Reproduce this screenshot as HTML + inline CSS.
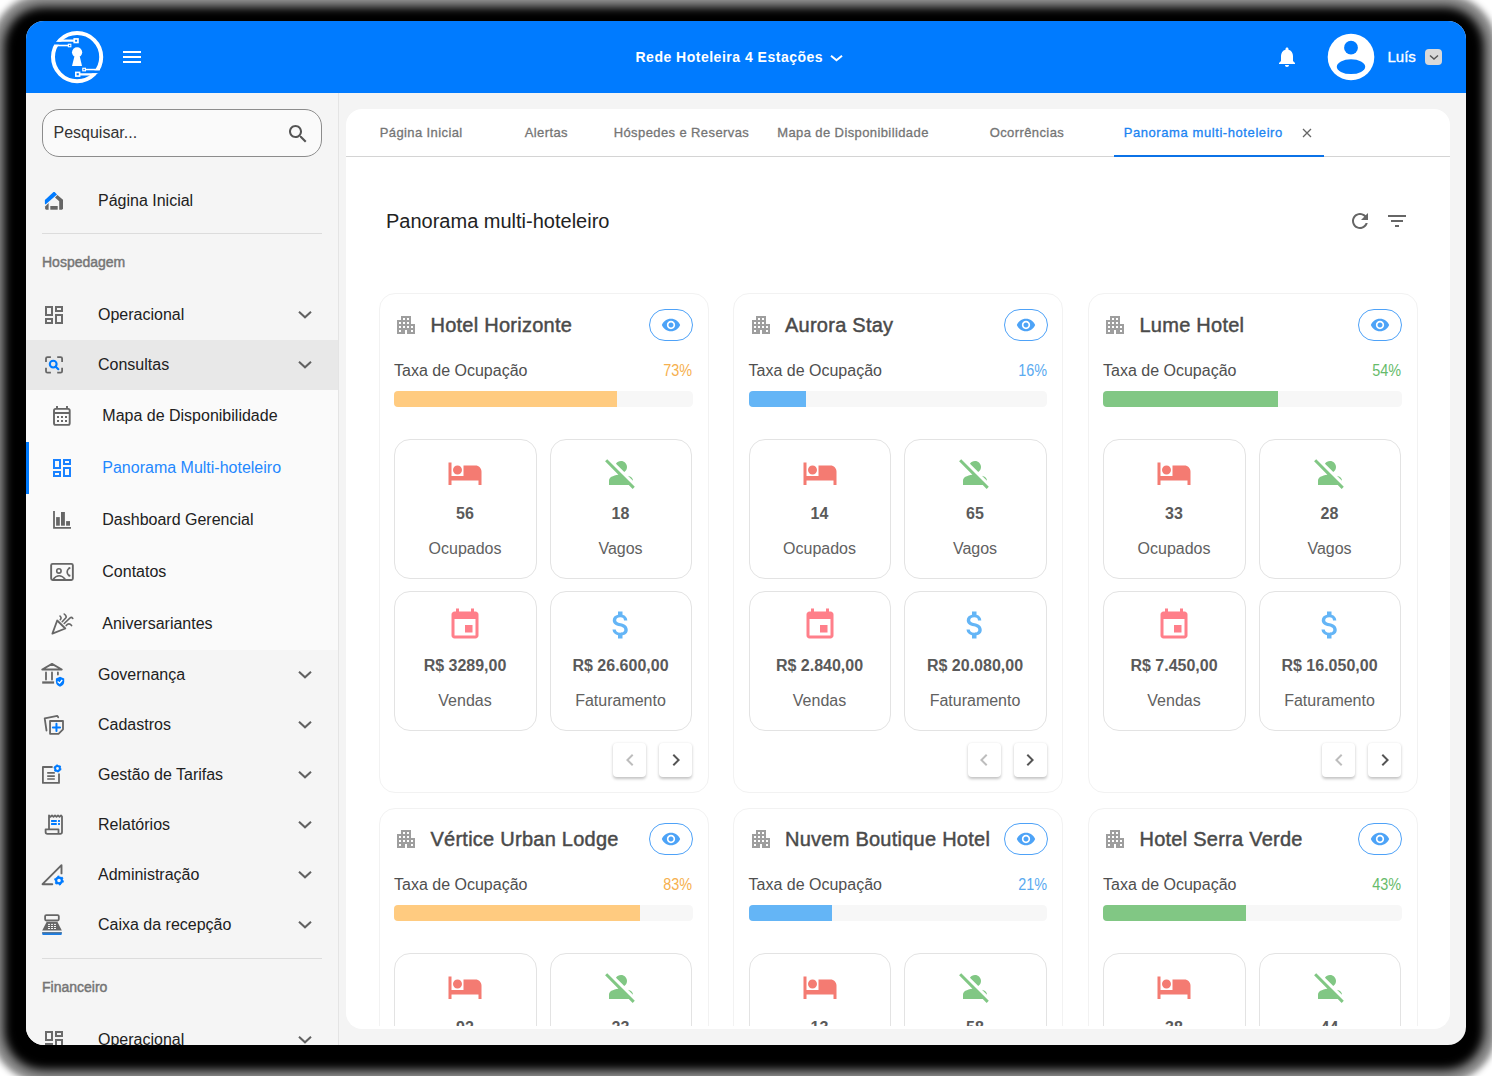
<!DOCTYPE html><html><head><meta charset="utf-8"><style>
html,body{margin:0;padding:0;}
body{width:1492px;height:1076px;position:relative;overflow:hidden;background:#fff;font-family:"Liberation Sans",sans-serif;}
.t{position:absolute;white-space:nowrap;}
svg{overflow:visible}
</style></head><body>
<div style="position:absolute;left:26px;top:21px;width:1440px;height:1024px;border-radius:20px;box-shadow:-2px 5.5px 10px 19.5px #000, -2px 5.5px 6px 31.5px rgba(0,0,0,0.45);background:#000"></div>
<div style="position:absolute;left:26px;top:21px;width:1440px;height:1024px;border-radius:18px;overflow:hidden;background:#f4f4f4">
<div style="position:absolute;left:-26px;top:-21px;width:1492px;height:1076px">
<div style="position:absolute;left:26px;top:21px;width:1440px;height:72px;background:#007bff"></div>
<svg style="position:absolute;left:48px;top:28px" width="58" height="58" viewBox="0 0 58 58">
<circle cx="29.1" cy="29.1" r="24.1" fill="none" stroke="#fff" stroke-width="4"/>
<rect x="0" y="13.7" width="24" height="3" fill="#007bff"/>
<rect x="34" y="42.3" width="24" height="3" fill="#007bff"/>
<path d="M7.6 13.7H26V11.6H15.5Z" fill="#fff"/>
<rect x="25.4" y="10.1" width="5.4" height="5.2" fill="#fff"/><rect x="27.1" y="11.8" width="2" height="1.9" fill="#007bff"/>
<rect x="6" y="16.7" width="15" height="1.6" fill="#fff"/>
<rect x="19.8" y="15.7" width="3.6" height="3.6" fill="#fff"/><rect x="21.0" y="16.9" width="1.3" height="1.3" fill="#007bff"/>
<rect x="37" y="40.8" width="15" height="1.5" fill="#fff"/>
<rect x="34.2" y="39.7" width="3.8" height="3.7" fill="#fff"/><rect x="35.4" y="40.9" width="1.4" height="1.3" fill="#007bff"/>
<path d="M50.6 45.3H32V47.4H42.5Z" fill="#fff"/>
<rect x="27" y="43.6" width="5.4" height="5.3" fill="#fff"/><rect x="28.6" y="45.2" width="2.2" height="2.1" fill="#007bff"/>
<circle cx="29.1" cy="24.3" r="5.1" fill="#fff"/>
<path d="M26.4 28.5H31.8L34 38H24z" fill="#fff"/>
</svg>
<div style="position:absolute;left:123px;top:51px;width:18px;height:2px;background:#fff"></div>
<div style="position:absolute;left:123px;top:56px;width:18px;height:2px;background:#fff"></div>
<div style="position:absolute;left:123px;top:61px;width:18px;height:2px;background:#fff"></div>
<div class="t" style="left:635.50px;top:49.95px;font-size:14px;line-height:14px;color:#fff;font-weight:700;letter-spacing:0.5px;">Rede Hoteleira 4 Estações</div>
<svg style="position:absolute;left:829.00px;top:52.50px" width="15" height="10"><polyline points="2,2.70 7.5,7.30 13,2.70" fill="none" stroke="#fff" stroke-width="2"/></svg>
<svg style="position:absolute;left:1275px;top:45px;" width="24" height="24" viewBox="0 0 24 24"><path d="M12 22c1.1 0 2-.9 2-2h-4c0 1.1.89 2 2 2zm6-6v-5c0-3.07-1.64-5.64-4.5-6.32V4c0-.83-.67-1.5-1.5-1.5s-1.5.67-1.5 1.5v.68C7.63 5.36 6 7.92 6 11v5l-2 2v1h16v-1l-2-2z" fill="#fff"/></svg>
<svg style="position:absolute;left:1327px;top:33px" width="48" height="48" viewBox="0 0 48 48">
<circle cx="24" cy="24" r="23.3" fill="#fff"/><circle cx="24" cy="14.7" r="6.9" fill="#007bff"/>
<ellipse cx="24" cy="33.7" rx="14.2" ry="7.4" fill="#007bff"/></svg>
<div class="t" style="left:1387.50px;top:49.20px;font-size:15px;line-height:15px;color:#fff;font-weight:400;-webkit-text-stroke:0.35px #fff;">Luís</div>
<div style="position:absolute;left:1425px;top:49px;width:17px;height:16px;background:#d9d9d9;border-radius:4px"></div>
<svg style="position:absolute;left:1427.50px;top:52.75px" width="12" height="8.5"><polyline points="2,2.49 6.0,6.01 10,2.49" fill="none" stroke="#555" stroke-width="1.4"/></svg>
<div style="position:absolute;left:26px;top:93px;width:312px;height:952px;background:#f5f5f5"></div>
<div style="position:absolute;left:338px;top:93px;width:1px;height:952px;background:#e4e4e4"></div>
<div style="position:absolute;left:42px;top:109px;width:280px;height:48px;box-sizing:border-box;border:1px solid #8c8c8c;border-radius:17px;background:#fafafa"></div>
<div class="t" style="left:53.50px;top:125.46px;font-size:16px;line-height:16px;color:#333;font-weight:400;">Pesquisar...</div>
<svg style="position:absolute;left:286px;top:122px;" width="24" height="24" viewBox="0 0 24 24"><path d="M15.5 14h-.79l-.28-.27C15.41 12.59 16 11.11 16 9.5 16 5.91 13.09 3 9.5 3S3 5.91 3 9.5 5.91 16 9.5 16c1.61 0 3.09-.59 4.23-1.57l.27.28v.79l5 4.99L20.49 19l-4.99-5zm-6 0C7.01 14 5 11.99 5 9.5S7.01 5 9.5 5 14 7.01 14 9.5 11.99 14 9.5 14z" fill="#555"/></svg>
<div class="t" style="left:98.00px;top:193.46px;font-size:16px;line-height:16px;color:#212121;font-weight:400;">Página Inicial</div>
<div style="position:absolute;left:42px;top:233px;width:280px;height:1px;background:#dcdcdc"></div>
<div class="t" style="left:42.00px;top:255.35px;font-size:14px;line-height:14px;color:#757575;font-weight:400;-webkit-text-stroke:0.45px #757575;">Hospedagem</div>
<svg style="position:absolute;left:42px;top:303px;" width="24" height="24" viewBox="0 0 24 24"><path d="M19 5v2h-4V5h4M9 5v6H5V5h4m10 8v6h-4v-6h4M9 17v2H5v-2h4M21 3h-8v6h8V3zM11 3H3v10h8V3zm10 8h-8v10h8V11zm-10 4H3v6h8v-6z" fill="#6b6b6b"/></svg><div class="t" style="left:98.00px;top:307.46px;font-size:16px;line-height:16px;color:#212121;font-weight:400;">Operacional</div><svg style="position:absolute;left:297.00px;top:309.00px" width="16" height="11"><polyline points="2,2.70 8.0,8.30 14,2.70" fill="none" stroke="#616161" stroke-width="2"/></svg>
<div style="position:absolute;left:26px;top:340px;width:312px;height:50px;background:#e8e8e8"></div><div class="t" style="left:98.00px;top:357.46px;font-size:16px;line-height:16px;color:#212121;font-weight:400;">Consultas</div><svg style="position:absolute;left:297.00px;top:359.00px" width="16" height="11"><polyline points="2,2.70 8.0,8.30 14,2.70" fill="none" stroke="#616161" stroke-width="2"/></svg>
<div style="position:absolute;left:26px;top:390px;width:312px;height:260px;background:#fafafa"></div>
<div style="position:absolute;left:26px;top:442px;width:3px;height:52px;background:#007bff"></div>

<div class="t" style="left:102.30px;top:408.46px;font-size:16px;line-height:16px;color:#212121;font-weight:400;">Mapa de Disponibilidade</div>
<svg style="position:absolute;left:50px;top:456px;" width="24" height="24" viewBox="0 0 24 24"><path d="M19 5v2h-4V5h4M9 5v6H5V5h4m10 8v6h-4v-6h4M9 17v2H5v-2h4M21 3h-8v6h8V3zM11 3H3v10h8V3zm10 8h-8v10h8V11zm-10 4H3v6h8v-6z" fill="#1a82ff"/></svg>
<div class="t" style="left:102.30px;top:460.46px;font-size:16px;line-height:16px;color:#1f88ff;font-weight:400;">Panorama Multi-hoteleiro</div>

<div class="t" style="left:102.30px;top:512.46px;font-size:16px;line-height:16px;color:#212121;font-weight:400;">Dashboard Gerencial</div>

<div class="t" style="left:102.30px;top:564.46px;font-size:16px;line-height:16px;color:#212121;font-weight:400;">Contatos</div>

<div class="t" style="left:102.30px;top:616.46px;font-size:16px;line-height:16px;color:#212121;font-weight:400;">Aniversariantes</div>
<div class="t" style="left:98.00px;top:667.46px;font-size:16px;line-height:16px;color:#212121;font-weight:400;">Governança</div><svg style="position:absolute;left:297.00px;top:669.00px" width="16" height="11"><polyline points="2,2.70 8.0,8.30 14,2.70" fill="none" stroke="#616161" stroke-width="2"/></svg>
<div class="t" style="left:98.00px;top:717.46px;font-size:16px;line-height:16px;color:#212121;font-weight:400;">Cadastros</div><svg style="position:absolute;left:297.00px;top:719.00px" width="16" height="11"><polyline points="2,2.70 8.0,8.30 14,2.70" fill="none" stroke="#616161" stroke-width="2"/></svg>
<div class="t" style="left:98.00px;top:767.46px;font-size:16px;line-height:16px;color:#212121;font-weight:400;">Gestão de Tarifas</div><svg style="position:absolute;left:297.00px;top:769.00px" width="16" height="11"><polyline points="2,2.70 8.0,8.30 14,2.70" fill="none" stroke="#616161" stroke-width="2"/></svg>
<div class="t" style="left:98.00px;top:817.46px;font-size:16px;line-height:16px;color:#212121;font-weight:400;">Relatórios</div><svg style="position:absolute;left:297.00px;top:819.00px" width="16" height="11"><polyline points="2,2.70 8.0,8.30 14,2.70" fill="none" stroke="#616161" stroke-width="2"/></svg>
<div class="t" style="left:98.00px;top:867.46px;font-size:16px;line-height:16px;color:#212121;font-weight:400;">Administração</div><svg style="position:absolute;left:297.00px;top:869.00px" width="16" height="11"><polyline points="2,2.70 8.0,8.30 14,2.70" fill="none" stroke="#616161" stroke-width="2"/></svg>
<div class="t" style="left:98.00px;top:917.46px;font-size:16px;line-height:16px;color:#212121;font-weight:400;">Caixa da recepção</div><svg style="position:absolute;left:297.00px;top:919.00px" width="16" height="11"><polyline points="2,2.70 8.0,8.30 14,2.70" fill="none" stroke="#616161" stroke-width="2"/></svg>
<svg style="position:absolute;left:0;top:0" width="1492" height="1076" viewBox="0 0 1492 1076">
<g fill="none" stroke="#666" stroke-width="1.8" stroke-linejoin="round">
<!-- home -->
</g>
<path d="M44.9 199.9L53.5 192.1H54.6L57 194.5L45.5 204.5L44.9 203.8Z" fill="#007bff"/>
<path d="M57.4 195.1L63 199.7V208.8L62 209.7H59.2V201.2L55 197.5Z" fill="#666"/>
<path d="M48.6 203V209.7H46L45.1 208.8V206.4Z" fill="#666"/>
<rect x="50.3" y="206" width="7.4" height="3.7" fill="#666"/>
<!-- consultas -->
<path d="M46 362V358.6Q46 357.1 47.5 357.1H50.9 M57.2 357.1H60.6Q62.1 357.1 62.1 358.6V362 M62.1 367.8V371.2Q62.1 372.7 60.6 372.7H57.2 M50.9 372.7H47.5Q46 372.7 46 371.2V367.8" fill="none" stroke="#666" stroke-width="1.8"/>
<circle cx="53.2" cy="364.1" r="3.4" fill="none" stroke="#007bff" stroke-width="2.1"/>
<path d="M55.8 366.7L58.3 369.2" stroke="#007bff" stroke-width="2.2" stroke-linecap="round"/>
<!-- mapa calendario -->
<rect x="54" y="408.9" width="15.7" height="16" rx="1.6" fill="none" stroke="#666" stroke-width="1.9"/>
<path d="M54 413H69.7 M57 406V409 M67 406V409" stroke="#666" stroke-width="1.9"/>
<g fill="#666"><rect x="57" y="416" width="2" height="2"/><rect x="61" y="416" width="2" height="2"/><rect x="65" y="416" width="2" height="2"/>
<rect x="57" y="420" width="2" height="2"/><rect x="61" y="420" width="2" height="2"/><rect x="65" y="420" width="2" height="2"/></g>
<!-- dashboard gerencial -->
<path d="M54 511V527.9H71" fill="none" stroke="#666" stroke-width="1.8"/>
<g fill="#666"><rect x="56.1" y="517.1" width="3.7" height="8.6"/><rect x="61" y="512" width="3.9" height="13.7"/><rect x="66.1" y="521.1" width="3.9" height="4.6"/></g>
<!-- contatos -->
<rect x="51.15" y="563.85" width="21.7" height="16.1" rx="1.5" fill="none" stroke="#666" stroke-width="1.9"/>
<circle cx="58.9" cy="570.9" r="2.2" fill="none" stroke="#666" stroke-width="1.6"/>
<path d="M52.9 579.4Q59.15 572.2 65.4 579.4" fill="none" stroke="#666" stroke-width="1.6"/>
<path d="M68.9 568.2Q65.4 572 68.9 575.7" fill="none" stroke="#666" stroke-width="1.6"/>
<circle cx="69.4" cy="568.2" r="1.1" fill="#666"/><circle cx="69.4" cy="575.7" r="1.1" fill="#666"/>
<!-- aniversariantes -->
<path d="M57.2 620.5L65.3 628.5L52.4 633.6Z" fill="none" stroke="#666" stroke-width="1.8" stroke-linejoin="round"/>
<path d="M64.2 623.5L70.1 617.8Q71.5 616.8 72.8 618.4 M62.2 621.7L65.9 617.8Q67 616.3 64.2 614 M60 616Q62 618 60.3 619.6 M66.2 625.6Q68.9 622.2 71.6 625.6" fill="none" stroke="#666" stroke-width="1.6" stroke-linecap="round"/>
<!-- governanca -->
<path d="M42.2 669.5L52 663.9L61.8 669.5Z" fill="none" stroke="#666" stroke-width="1.8" stroke-linejoin="round"/>
<path d="M46 672.4V679.5 M52 672.4V679.5 M57.9 672.4V674.5" stroke="#666" stroke-width="1.8" stroke-linecap="round"/>
<path d="M42.2 682.5H54.1" stroke="#666" stroke-width="2.3"/>
<path d="M60 676.7L64.2 678.4V681.5Q64.2 685.2 60 686.8Q55.9 685.2 55.9 681.5V678.4Z" fill="#007bff"/>
<path d="M57.6 681.6L59.6 683.2L62.2 680" fill="none" stroke="#fff" stroke-width="1.3"/>
<!-- cadastros -->
<path d="M46.5 730.5L44.7 718.3L57.2 715.8L58.2 717.3" fill="none" stroke="#666" stroke-width="1.8" stroke-linecap="round" stroke-linejoin="round"/>
<path d="M50.05 721H63V729.3L58.5 733.8H50.05Z" fill="none" stroke="#666" stroke-width="1.8" stroke-linejoin="round"/>
<path d="M56.45 723.8V731 M52.85 727.4H60.05" stroke="#007bff" stroke-width="2" stroke-linecap="round"/>
<!-- gestao de tarifas -->
<path d="M52.6 767H42.9V782.9H59V773.4" fill="none" stroke="#666" stroke-width="1.8" stroke-linejoin="round"/>
<path d="M47.2 772.9H54.8 M47.2 776.1H54.8 M47.2 779H54.8" stroke="#666" stroke-width="1.6"/>
<circle cx="57.5" cy="768.5" r="2.4" fill="none" stroke="#007bff" stroke-width="2"/>
<circle cx="57.5" cy="768.5" r="3.3" fill="none" stroke="#007bff" stroke-width="1.4" stroke-dasharray="1.7 1.75"/>
<!-- relatorios -->
<path d="M49 829.3V815.4L50.5 816.8L52 815.4L53.5 816.8L55 815.4L56.5 816.8L58 815.4L59.5 816.8L61 815.4L62 816.5V832Q62 833.8 60.2 833.8H47.4Q45.6 833.8 45.6 832V829.3H58.5V833.8" fill="none" stroke="#666" stroke-width="1.8" stroke-linejoin="round"/>
<path d="M51.1 821H56.75 M58.1 821H59.9 M51.1 824H56.75 M58.1 824H59.9" stroke="#007bff" stroke-width="1.9"/>
<!-- administracao -->
<path d="M61.5 873.4V865.1L42.5 884.2H52.3" fill="none" stroke="#666" stroke-width="1.9" stroke-linejoin="round" stroke-linecap="round"/>
<circle cx="59" cy="880.5" r="2.9" fill="none" stroke="#007bff" stroke-width="2.2"/>
<circle cx="59" cy="880.5" r="4.0" fill="none" stroke="#007bff" stroke-width="1.8" stroke-dasharray="1.9 2.29"/>
<!-- caixa -->
<rect x="45.1" y="915.1" width="13.7" height="5.4" rx="1.2" fill="none" stroke="#666" stroke-width="1.8"/>
<path d="M46.6 922.1H57.5L61.8 930.6H42.2Z" fill="#666"/>
<g fill="#f5f5f5"><rect x="48" y="923.9" width="2" height="1"/><rect x="51" y="923.9" width="2" height="1"/><rect x="54" y="923.9" width="2" height="1"/>
<rect x="48" y="926" width="2" height="1"/><rect x="51" y="926" width="2" height="1"/><rect x="54" y="926" width="2" height="1"/>
<rect x="48" y="928" width="2" height="1"/><rect x="51" y="928" width="2" height="1"/><rect x="54" y="928" width="2" height="1"/></g>
<path d="M42.2 932.3H61.8V933.9Q61.8 934.9 60.8 934.9H43.2Q42.2 934.9 42.2 933.9Z" fill="#1a7fe8"/>
<rect x="42.2" y="932.3" width="19.6" height="1" fill="#5a6a7a"/>
</svg>
<div style="position:absolute;left:42px;top:958px;width:280px;height:1px;background:#dcdcdc"></div>
<div class="t" style="left:42.00px;top:980.15px;font-size:14px;line-height:14px;color:#757575;font-weight:400;-webkit-text-stroke:0.45px #757575;">Financeiro</div>
<svg style="position:absolute;left:42px;top:1028px;" width="24" height="24" viewBox="0 0 24 24"><path d="M19 5v2h-4V5h4M9 5v6H5V5h4m10 8v6h-4v-6h4M9 17v2H5v-2h4M21 3h-8v6h8V3zM11 3H3v10h8V3zm10 8h-8v10h8V11zm-10 4H3v6h8v-6z" fill="#6b6b6b"/></svg><div class="t" style="left:98.00px;top:1032.46px;font-size:16px;line-height:16px;color:#212121;font-weight:400;">Operacional</div><svg style="position:absolute;left:297.00px;top:1034.00px" width="16" height="11"><polyline points="2,2.70 8.0,8.30 14,2.70" fill="none" stroke="#616161" stroke-width="2"/></svg>
<div style="position:absolute;left:346px;top:109px;width:1104px;height:919.5px;background:#fff;border-radius:16px"></div>
<div class="t" style="left:379.70px;top:125.80px;font-size:13px;line-height:13px;color:#757575;font-weight:400;-webkit-text-stroke:0.3px #757575;letter-spacing:0.4px;">Página Inicial</div>
<div class="t" style="left:524.70px;top:125.80px;font-size:13px;line-height:13px;color:#757575;font-weight:400;-webkit-text-stroke:0.3px #757575;letter-spacing:0.4px;">Alertas</div>
<div class="t" style="left:613.70px;top:125.80px;font-size:13px;line-height:13px;color:#757575;font-weight:400;-webkit-text-stroke:0.3px #757575;letter-spacing:0.4px;">Hóspedes e Reservas</div>
<div class="t" style="left:777.20px;top:125.80px;font-size:13px;line-height:13px;color:#757575;font-weight:400;-webkit-text-stroke:0.3px #757575;letter-spacing:0.4px;">Mapa de Disponibilidade</div>
<div class="t" style="left:989.70px;top:125.80px;font-size:13px;line-height:13px;color:#757575;font-weight:400;-webkit-text-stroke:0.3px #757575;letter-spacing:0.4px;">Ocorrências</div>
<div class="t" style="left:1123.70px;top:125.80px;font-size:13px;line-height:13px;color:#1b84f2;font-weight:400;-webkit-text-stroke:0.3px #1b84f2;letter-spacing:0.58px;">Panorama multi-hoteleiro</div>
<svg style="position:absolute;left:1302px;top:128px" width="10" height="10" viewBox="0 0 10 10"><path d="M1 1L9 9M9 1L1 9" stroke="#666" stroke-width="1.3"/></svg>
<div style="position:absolute;left:346px;top:156px;width:1104px;height:1px;background:#d4d4d4"></div>
<div style="position:absolute;left:1114px;top:155px;width:210px;height:2px;background:#0b72e7"></div>
<div class="t" style="left:386.00px;top:210.87px;font-size:20px;line-height:20px;color:#222;font-weight:400;">Panorama multi-hoteleiro</div>
<svg style="position:absolute;left:1348px;top:209px;" width="24" height="24" viewBox="0 0 24 24"><path d="M17.65 6.35C16.2 4.9 14.21 4 12 4c-4.42 0-7.99 3.58-7.99 8s3.57 8 7.99 8c3.73 0 6.84-2.55 7.73-6h-2.08c-.82 2.33-3.04 4-5.65 4-3.31 0-6-2.69-6-6s2.69-6 6-6c1.66 0 3.14.69 4.22 1.78L13 11h7V4l-2.35 2.35z" fill="#666"/></svg>
<svg style="position:absolute;left:1385px;top:209px;" width="24" height="24" viewBox="0 0 24 24"><path d="M10 18h4v-2h-4v2zM3 6v2h18V6H3zm3 7h12v-2H6v2z" fill="#666"/></svg>
<div style="position:absolute;left:346px;top:157px;width:1104px;height:869px;overflow:hidden">
<div style="position:absolute;left:-346px;top:-157px;width:1492px;height:1076px">
<div style="position:absolute;left:378.5px;top:293.3px;width:330px;height:499.5px;box-sizing:border-box;border:1px solid #f2f2f2;border-radius:16px;background:#fff"></div>
<svg style="position:absolute;left:394.0px;top:313.0px;" width="24" height="24" viewBox="0 0 24 24"><path d="M17 11V3H7v4H3v14h8v-4h2v4h8V11h-4zM7 19H5v-2h2v2zm0-4H5v-2h2v2zm0-4H5V9h2v2zm4 4H9v-2h2v2zm0-4H9V9h2v2zm0-4H9V5h2v2zm4 8h-2v-2h2v2zm0-4h-2V9h2v2zm0-4h-2V5h2v2zm4 12h-2v-2h2v2zm0-4h-2v-2h2v2z" fill="#9e9e9e"/></svg>
<div class="t" style="left:430.50px;top:314.67px;font-size:20px;line-height:20px;color:#4a4a4a;font-weight:400;-webkit-text-stroke:0.45px #4a4a4a;letter-spacing:0.25px;">Hotel Horizonte</div>
<div style="position:absolute;left:649.0px;top:309.0px;width:44px;height:32px;box-sizing:border-box;border:1.5px solid #4ea2f8;border-radius:16px"></div>
<svg style="position:absolute;left:661.0px;top:315.0px;" width="20" height="20" viewBox="0 0 24 24"><path d="M12 4.5C7 4.5 2.73 7.61 1 12c1.73 4.39 6 7.5 11 7.5s9.27-3.11 11-7.5c-1.73-4.39-6-7.5-11-7.5zM12 17c-2.76 0-5-2.24-5-5s2.24-5 5-5 5 2.24 5 5-2.24 5-5 5zm0-8c-1.66 0-3 1.34-3 3s1.34 3 3 3 3-1.34 3-3-1.34-3-3-3z" fill="#4da3f7"/></svg>
<div class="t" style="left:394.00px;top:362.66px;font-size:16px;line-height:16px;color:#4f4f4f;font-weight:400;">Taxa de Ocupação</div>
<div class="t" style="right:799.70px;top:362.66px;font-size:16px;line-height:16px;color:#f6b04e;font-weight:400;transform:scaleX(0.9);transform-origin:100% 50%;">73%</div>
<div style="position:absolute;left:394.0px;top:391.0px;width:298.5px;height:16px;background:#f7f7f7;border-radius:4.5px"></div>
<div style="position:absolute;left:394.0px;top:391.0px;width:223px;height:16px;background:#ffcb80;border-radius:4px 0 0 4px"></div>
<div style="position:absolute;left:394.0px;top:439.0px;width:142.5px;height:139.5px;box-sizing:border-box;border:1px solid #e3e3e3;border-radius:16px;background:#fff"></div>
<svg style="position:absolute;left:447.0px;top:454.5px;" width="36" height="36" viewBox="0 0 24 24"><path d="M7 13c1.66 0 3-1.34 3-3S8.66 7 7 7s-3 1.34-3 3 1.34 3 3 3zm12-6h-8v7H3V5H1v15h2v-3h18v3h2v-9c0-2.21-1.79-4-4-4z" fill="#f47b72"/></svg>
<div class="t" style="left:265.00px;width:400px;text-align:center;top:505.76px;font-size:16px;line-height:16px;color:#5a5a5a;font-weight:700;">56</div>
<div class="t" style="left:265.00px;width:400px;text-align:center;top:541.06px;font-size:16px;line-height:16px;color:#616161;font-weight:400;">Ocupados</div>
<div style="position:absolute;left:549.5px;top:439.0px;width:142.5px;height:139.5px;box-sizing:border-box;border:1px solid #e3e3e3;border-radius:16px;background:#fff"></div>
<svg style="position:absolute;left:602.5px;top:454.5px;" width="36" height="36" viewBox="0 0 24 24"><path d="M8.65 5.82C9.36 4.72 10.6 4 12 4c2.21 0 4 1.79 4 4 0 1.4-.72 2.64-1.82 3.35L8.65 5.82zM20 17.17c-.02-1.1-.63-2.11-1.61-2.62-.54-.28-1.13-.54-1.77-.76L20 17.17zm1.19 4.02L2.81 2.81 1.39 4.22l8.89 8.89c-1.81.23-3.39.79-4.67 1.45C4.61 15.08 4 16.11 4 17.22V20h13.17l2.61 2.61 1.41-1.42z" fill="#81c784"/></svg>
<div class="t" style="left:420.50px;width:400px;text-align:center;top:505.76px;font-size:16px;line-height:16px;color:#5a5a5a;font-weight:700;">18</div>
<div class="t" style="left:420.50px;width:400px;text-align:center;top:541.06px;font-size:16px;line-height:16px;color:#616161;font-weight:400;">Vagos</div>
<div style="position:absolute;left:394.0px;top:591.0px;width:142.5px;height:139.5px;box-sizing:border-box;border:1px solid #e3e3e3;border-radius:16px;background:#fff"></div>
<svg style="position:absolute;left:447.0px;top:606.5px;" width="36" height="36" viewBox="0 0 24 24"><path d="M17 12h-5v5h5v-5zM16 1v2H8V1H6v2H5c-1.11 0-1.99.9-1.99 2L3 19c0 1.1.89 2 2 2h14c1.1 0 2-.9 2-2V5c0-1.1-.9-2-2-2h-1V1h-2zm3 18H5V8h14v11z" fill="#ff7f8a"/></svg>
<div class="t" style="left:265.00px;width:400px;text-align:center;top:657.76px;font-size:16px;line-height:16px;color:#5a5a5a;font-weight:700;">R$ 3289,00</div>
<div class="t" style="left:265.00px;width:400px;text-align:center;top:693.06px;font-size:16px;line-height:16px;color:#616161;font-weight:400;">Vendas</div>
<div style="position:absolute;left:549.5px;top:591.0px;width:142.5px;height:139.5px;box-sizing:border-box;border:1px solid #e3e3e3;border-radius:16px;background:#fff"></div>
<svg style="position:absolute;left:602.5px;top:606.5px;" width="36" height="36" viewBox="0 0 24 24"><path d="M11.8 10.9c-2.27-.59-3-1.2-3-2.15 0-1.09 1.01-1.85 2.7-1.85 1.78 0 2.44.85 2.5 2.1h2.21c-.07-1.72-1.12-3.3-3.21-3.81V3h-3v2.16c-1.94.42-3.5 1.68-3.5 3.61 0 2.31 1.91 3.46 4.7 4.13 2.5.6 3 1.48 3 2.41 0 .69-.49 1.79-2.7 1.79-2.06 0-2.87-.92-2.98-2.1h-2.2c.12 2.19 1.76 3.42 3.68 3.83V21h3v-2.15c1.95-.37 3.5-1.5 3.5-3.55 0-2.84-2.43-3.81-4.7-4.4z" fill="#64b5f6"/></svg>
<div class="t" style="left:420.50px;width:400px;text-align:center;top:657.76px;font-size:16px;line-height:16px;color:#5a5a5a;font-weight:700;">R$ 26.600,00</div>
<div class="t" style="left:420.50px;width:400px;text-align:center;top:693.06px;font-size:16px;line-height:16px;color:#616161;font-weight:400;">Faturamento</div>
<div style="position:absolute;left:613.0px;top:743.0px;width:33px;height:34px;background:#fff;border-radius:4px;box-shadow:0 1.5px 3px rgba(0,0,0,0.24)"></div>
<div style="position:absolute;left:659.0px;top:743.0px;width:33px;height:34px;background:#fff;border-radius:4px;box-shadow:0 1.5px 3px rgba(0,0,0,0.24)"></div>
<svg style="position:absolute;left:617.5px;top:747.5px;" width="24" height="24" viewBox="0 0 24 24"><path d="M15.41 7.41 14 6l-6 6 6 6 1.41-1.41L10.83 12z" fill="#bdbdbd"/></svg>
<svg style="position:absolute;left:663.5px;top:747.5px;" width="24" height="24" viewBox="0 0 24 24"><path d="M10 6 8.59 7.41 13.17 12l-4.58 4.59L10 18l6-6z" fill="#555"/></svg>
<div style="position:absolute;left:733px;top:293.3px;width:330px;height:499.5px;box-sizing:border-box;border:1px solid #f2f2f2;border-radius:16px;background:#fff"></div>
<svg style="position:absolute;left:748.5px;top:313.0px;" width="24" height="24" viewBox="0 0 24 24"><path d="M17 11V3H7v4H3v14h8v-4h2v4h8V11h-4zM7 19H5v-2h2v2zm0-4H5v-2h2v2zm0-4H5V9h2v2zm4 4H9v-2h2v2zm0-4H9V9h2v2zm0-4H9V5h2v2zm4 8h-2v-2h2v2zm0-4h-2V9h2v2zm0-4h-2V5h2v2zm4 12h-2v-2h2v2zm0-4h-2v-2h2v2z" fill="#9e9e9e"/></svg>
<div class="t" style="left:785.00px;top:314.67px;font-size:20px;line-height:20px;color:#4a4a4a;font-weight:400;-webkit-text-stroke:0.45px #4a4a4a;letter-spacing:0.25px;">Aurora Stay</div>
<div style="position:absolute;left:1003.5px;top:309.0px;width:44px;height:32px;box-sizing:border-box;border:1.5px solid #4ea2f8;border-radius:16px"></div>
<svg style="position:absolute;left:1015.5px;top:315.0px;" width="20" height="20" viewBox="0 0 24 24"><path d="M12 4.5C7 4.5 2.73 7.61 1 12c1.73 4.39 6 7.5 11 7.5s9.27-3.11 11-7.5c-1.73-4.39-6-7.5-11-7.5zM12 17c-2.76 0-5-2.24-5-5s2.24-5 5-5 5 2.24 5 5-2.24 5-5 5zm0-8c-1.66 0-3 1.34-3 3s1.34 3 3 3 3-1.34 3-3-1.34-3-3-3z" fill="#4da3f7"/></svg>
<div class="t" style="left:748.50px;top:362.66px;font-size:16px;line-height:16px;color:#4f4f4f;font-weight:400;">Taxa de Ocupação</div>
<div class="t" style="right:445.20px;top:362.66px;font-size:16px;line-height:16px;color:#5aaaf0;font-weight:400;transform:scaleX(0.9);transform-origin:100% 50%;">16%</div>
<div style="position:absolute;left:748.5px;top:391.0px;width:298.5px;height:16px;background:#f7f7f7;border-radius:4.5px"></div>
<div style="position:absolute;left:748.5px;top:391.0px;width:57px;height:16px;background:#64b5f6;border-radius:4px 0 0 4px"></div>
<div style="position:absolute;left:748.5px;top:439.0px;width:142.5px;height:139.5px;box-sizing:border-box;border:1px solid #e3e3e3;border-radius:16px;background:#fff"></div>
<svg style="position:absolute;left:801.5px;top:454.5px;" width="36" height="36" viewBox="0 0 24 24"><path d="M7 13c1.66 0 3-1.34 3-3S8.66 7 7 7s-3 1.34-3 3 1.34 3 3 3zm12-6h-8v7H3V5H1v15h2v-3h18v3h2v-9c0-2.21-1.79-4-4-4z" fill="#f47b72"/></svg>
<div class="t" style="left:619.50px;width:400px;text-align:center;top:505.76px;font-size:16px;line-height:16px;color:#5a5a5a;font-weight:700;">14</div>
<div class="t" style="left:619.50px;width:400px;text-align:center;top:541.06px;font-size:16px;line-height:16px;color:#616161;font-weight:400;">Ocupados</div>
<div style="position:absolute;left:904.0px;top:439.0px;width:142.5px;height:139.5px;box-sizing:border-box;border:1px solid #e3e3e3;border-radius:16px;background:#fff"></div>
<svg style="position:absolute;left:957.0px;top:454.5px;" width="36" height="36" viewBox="0 0 24 24"><path d="M8.65 5.82C9.36 4.72 10.6 4 12 4c2.21 0 4 1.79 4 4 0 1.4-.72 2.64-1.82 3.35L8.65 5.82zM20 17.17c-.02-1.1-.63-2.11-1.61-2.62-.54-.28-1.13-.54-1.77-.76L20 17.17zm1.19 4.02L2.81 2.81 1.39 4.22l8.89 8.89c-1.81.23-3.39.79-4.67 1.45C4.61 15.08 4 16.11 4 17.22V20h13.17l2.61 2.61 1.41-1.42z" fill="#81c784"/></svg>
<div class="t" style="left:775.00px;width:400px;text-align:center;top:505.76px;font-size:16px;line-height:16px;color:#5a5a5a;font-weight:700;">65</div>
<div class="t" style="left:775.00px;width:400px;text-align:center;top:541.06px;font-size:16px;line-height:16px;color:#616161;font-weight:400;">Vagos</div>
<div style="position:absolute;left:748.5px;top:591.0px;width:142.5px;height:139.5px;box-sizing:border-box;border:1px solid #e3e3e3;border-radius:16px;background:#fff"></div>
<svg style="position:absolute;left:801.5px;top:606.5px;" width="36" height="36" viewBox="0 0 24 24"><path d="M17 12h-5v5h5v-5zM16 1v2H8V1H6v2H5c-1.11 0-1.99.9-1.99 2L3 19c0 1.1.89 2 2 2h14c1.1 0 2-.9 2-2V5c0-1.1-.9-2-2-2h-1V1h-2zm3 18H5V8h14v11z" fill="#ff7f8a"/></svg>
<div class="t" style="left:619.50px;width:400px;text-align:center;top:657.76px;font-size:16px;line-height:16px;color:#5a5a5a;font-weight:700;">R$ 2.840,00</div>
<div class="t" style="left:619.50px;width:400px;text-align:center;top:693.06px;font-size:16px;line-height:16px;color:#616161;font-weight:400;">Vendas</div>
<div style="position:absolute;left:904.0px;top:591.0px;width:142.5px;height:139.5px;box-sizing:border-box;border:1px solid #e3e3e3;border-radius:16px;background:#fff"></div>
<svg style="position:absolute;left:957.0px;top:606.5px;" width="36" height="36" viewBox="0 0 24 24"><path d="M11.8 10.9c-2.27-.59-3-1.2-3-2.15 0-1.09 1.01-1.85 2.7-1.85 1.78 0 2.44.85 2.5 2.1h2.21c-.07-1.72-1.12-3.3-3.21-3.81V3h-3v2.16c-1.94.42-3.5 1.68-3.5 3.61 0 2.31 1.91 3.46 4.7 4.13 2.5.6 3 1.48 3 2.41 0 .69-.49 1.79-2.7 1.79-2.06 0-2.87-.92-2.98-2.1h-2.2c.12 2.19 1.76 3.42 3.68 3.83V21h3v-2.15c1.95-.37 3.5-1.5 3.5-3.55 0-2.84-2.43-3.81-4.7-4.4z" fill="#64b5f6"/></svg>
<div class="t" style="left:775.00px;width:400px;text-align:center;top:657.76px;font-size:16px;line-height:16px;color:#5a5a5a;font-weight:700;">R$ 20.080,00</div>
<div class="t" style="left:775.00px;width:400px;text-align:center;top:693.06px;font-size:16px;line-height:16px;color:#616161;font-weight:400;">Faturamento</div>
<div style="position:absolute;left:967.5px;top:743.0px;width:33px;height:34px;background:#fff;border-radius:4px;box-shadow:0 1.5px 3px rgba(0,0,0,0.24)"></div>
<div style="position:absolute;left:1013.5px;top:743.0px;width:33px;height:34px;background:#fff;border-radius:4px;box-shadow:0 1.5px 3px rgba(0,0,0,0.24)"></div>
<svg style="position:absolute;left:972.0px;top:747.5px;" width="24" height="24" viewBox="0 0 24 24"><path d="M15.41 7.41 14 6l-6 6 6 6 1.41-1.41L10.83 12z" fill="#bdbdbd"/></svg>
<svg style="position:absolute;left:1018.0px;top:747.5px;" width="24" height="24" viewBox="0 0 24 24"><path d="M10 6 8.59 7.41 13.17 12l-4.58 4.59L10 18l6-6z" fill="#555"/></svg>
<div style="position:absolute;left:1087.5px;top:293.3px;width:330px;height:499.5px;box-sizing:border-box;border:1px solid #f2f2f2;border-radius:16px;background:#fff"></div>
<svg style="position:absolute;left:1103.0px;top:313.0px;" width="24" height="24" viewBox="0 0 24 24"><path d="M17 11V3H7v4H3v14h8v-4h2v4h8V11h-4zM7 19H5v-2h2v2zm0-4H5v-2h2v2zm0-4H5V9h2v2zm4 4H9v-2h2v2zm0-4H9V9h2v2zm0-4H9V5h2v2zm4 8h-2v-2h2v2zm0-4h-2V9h2v2zm0-4h-2V5h2v2zm4 12h-2v-2h2v2zm0-4h-2v-2h2v2z" fill="#9e9e9e"/></svg>
<div class="t" style="left:1139.50px;top:314.67px;font-size:20px;line-height:20px;color:#4a4a4a;font-weight:400;-webkit-text-stroke:0.45px #4a4a4a;letter-spacing:0.25px;">Lume Hotel</div>
<div style="position:absolute;left:1358.0px;top:309.0px;width:44px;height:32px;box-sizing:border-box;border:1.5px solid #4ea2f8;border-radius:16px"></div>
<svg style="position:absolute;left:1370.0px;top:315.0px;" width="20" height="20" viewBox="0 0 24 24"><path d="M12 4.5C7 4.5 2.73 7.61 1 12c1.73 4.39 6 7.5 11 7.5s9.27-3.11 11-7.5c-1.73-4.39-6-7.5-11-7.5zM12 17c-2.76 0-5-2.24-5-5s2.24-5 5-5 5 2.24 5 5-2.24 5-5 5zm0-8c-1.66 0-3 1.34-3 3s1.34 3 3 3 3-1.34 3-3-1.34-3-3-3z" fill="#4da3f7"/></svg>
<div class="t" style="left:1103.00px;top:362.66px;font-size:16px;line-height:16px;color:#4f4f4f;font-weight:400;">Taxa de Ocupação</div>
<div class="t" style="right:90.70px;top:362.66px;font-size:16px;line-height:16px;color:#66bb6a;font-weight:400;transform:scaleX(0.9);transform-origin:100% 50%;">54%</div>
<div style="position:absolute;left:1103.0px;top:391.0px;width:298.5px;height:16px;background:#f7f7f7;border-radius:4.5px"></div>
<div style="position:absolute;left:1103.0px;top:391.0px;width:175px;height:16px;background:#81c784;border-radius:4px 0 0 4px"></div>
<div style="position:absolute;left:1103.0px;top:439.0px;width:142.5px;height:139.5px;box-sizing:border-box;border:1px solid #e3e3e3;border-radius:16px;background:#fff"></div>
<svg style="position:absolute;left:1156.0px;top:454.5px;" width="36" height="36" viewBox="0 0 24 24"><path d="M7 13c1.66 0 3-1.34 3-3S8.66 7 7 7s-3 1.34-3 3 1.34 3 3 3zm12-6h-8v7H3V5H1v15h2v-3h18v3h2v-9c0-2.21-1.79-4-4-4z" fill="#f47b72"/></svg>
<div class="t" style="left:974.00px;width:400px;text-align:center;top:505.76px;font-size:16px;line-height:16px;color:#5a5a5a;font-weight:700;">33</div>
<div class="t" style="left:974.00px;width:400px;text-align:center;top:541.06px;font-size:16px;line-height:16px;color:#616161;font-weight:400;">Ocupados</div>
<div style="position:absolute;left:1258.5px;top:439.0px;width:142.5px;height:139.5px;box-sizing:border-box;border:1px solid #e3e3e3;border-radius:16px;background:#fff"></div>
<svg style="position:absolute;left:1311.5px;top:454.5px;" width="36" height="36" viewBox="0 0 24 24"><path d="M8.65 5.82C9.36 4.72 10.6 4 12 4c2.21 0 4 1.79 4 4 0 1.4-.72 2.64-1.82 3.35L8.65 5.82zM20 17.17c-.02-1.1-.63-2.11-1.61-2.62-.54-.28-1.13-.54-1.77-.76L20 17.17zm1.19 4.02L2.81 2.81 1.39 4.22l8.89 8.89c-1.81.23-3.39.79-4.67 1.45C4.61 15.08 4 16.11 4 17.22V20h13.17l2.61 2.61 1.41-1.42z" fill="#81c784"/></svg>
<div class="t" style="left:1129.50px;width:400px;text-align:center;top:505.76px;font-size:16px;line-height:16px;color:#5a5a5a;font-weight:700;">28</div>
<div class="t" style="left:1129.50px;width:400px;text-align:center;top:541.06px;font-size:16px;line-height:16px;color:#616161;font-weight:400;">Vagos</div>
<div style="position:absolute;left:1103.0px;top:591.0px;width:142.5px;height:139.5px;box-sizing:border-box;border:1px solid #e3e3e3;border-radius:16px;background:#fff"></div>
<svg style="position:absolute;left:1156.0px;top:606.5px;" width="36" height="36" viewBox="0 0 24 24"><path d="M17 12h-5v5h5v-5zM16 1v2H8V1H6v2H5c-1.11 0-1.99.9-1.99 2L3 19c0 1.1.89 2 2 2h14c1.1 0 2-.9 2-2V5c0-1.1-.9-2-2-2h-1V1h-2zm3 18H5V8h14v11z" fill="#ff7f8a"/></svg>
<div class="t" style="left:974.00px;width:400px;text-align:center;top:657.76px;font-size:16px;line-height:16px;color:#5a5a5a;font-weight:700;">R$ 7.450,00</div>
<div class="t" style="left:974.00px;width:400px;text-align:center;top:693.06px;font-size:16px;line-height:16px;color:#616161;font-weight:400;">Vendas</div>
<div style="position:absolute;left:1258.5px;top:591.0px;width:142.5px;height:139.5px;box-sizing:border-box;border:1px solid #e3e3e3;border-radius:16px;background:#fff"></div>
<svg style="position:absolute;left:1311.5px;top:606.5px;" width="36" height="36" viewBox="0 0 24 24"><path d="M11.8 10.9c-2.27-.59-3-1.2-3-2.15 0-1.09 1.01-1.85 2.7-1.85 1.78 0 2.44.85 2.5 2.1h2.21c-.07-1.72-1.12-3.3-3.21-3.81V3h-3v2.16c-1.94.42-3.5 1.68-3.5 3.61 0 2.31 1.91 3.46 4.7 4.13 2.5.6 3 1.48 3 2.41 0 .69-.49 1.79-2.7 1.79-2.06 0-2.87-.92-2.98-2.1h-2.2c.12 2.19 1.76 3.42 3.68 3.83V21h3v-2.15c1.95-.37 3.5-1.5 3.5-3.55 0-2.84-2.43-3.81-4.7-4.4z" fill="#64b5f6"/></svg>
<div class="t" style="left:1129.50px;width:400px;text-align:center;top:657.76px;font-size:16px;line-height:16px;color:#5a5a5a;font-weight:700;">R$ 16.050,00</div>
<div class="t" style="left:1129.50px;width:400px;text-align:center;top:693.06px;font-size:16px;line-height:16px;color:#616161;font-weight:400;">Faturamento</div>
<div style="position:absolute;left:1322.0px;top:743.0px;width:33px;height:34px;background:#fff;border-radius:4px;box-shadow:0 1.5px 3px rgba(0,0,0,0.24)"></div>
<div style="position:absolute;left:1368.0px;top:743.0px;width:33px;height:34px;background:#fff;border-radius:4px;box-shadow:0 1.5px 3px rgba(0,0,0,0.24)"></div>
<svg style="position:absolute;left:1326.5px;top:747.5px;" width="24" height="24" viewBox="0 0 24 24"><path d="M15.41 7.41 14 6l-6 6 6 6 1.41-1.41L10.83 12z" fill="#bdbdbd"/></svg>
<svg style="position:absolute;left:1372.5px;top:747.5px;" width="24" height="24" viewBox="0 0 24 24"><path d="M10 6 8.59 7.41 13.17 12l-4.58 4.59L10 18l6-6z" fill="#555"/></svg>
<div style="position:absolute;left:378.5px;top:807.5px;width:330px;height:499.5px;box-sizing:border-box;border:1px solid #f2f2f2;border-radius:16px;background:#fff"></div>
<svg style="position:absolute;left:394.0px;top:827.2px;" width="24" height="24" viewBox="0 0 24 24"><path d="M17 11V3H7v4H3v14h8v-4h2v4h8V11h-4zM7 19H5v-2h2v2zm0-4H5v-2h2v2zm0-4H5V9h2v2zm4 4H9v-2h2v2zm0-4H9V9h2v2zm0-4H9V5h2v2zm4 8h-2v-2h2v2zm0-4h-2V9h2v2zm0-4h-2V5h2v2zm4 12h-2v-2h2v2zm0-4h-2v-2h2v2z" fill="#9e9e9e"/></svg>
<div class="t" style="left:430.50px;top:828.87px;font-size:20px;line-height:20px;color:#4a4a4a;font-weight:400;-webkit-text-stroke:0.45px #4a4a4a;letter-spacing:0.25px;">Vértice Urban Lodge</div>
<div style="position:absolute;left:649.0px;top:823.2px;width:44px;height:32px;box-sizing:border-box;border:1.5px solid #4ea2f8;border-radius:16px"></div>
<svg style="position:absolute;left:661.0px;top:829.2px;" width="20" height="20" viewBox="0 0 24 24"><path d="M12 4.5C7 4.5 2.73 7.61 1 12c1.73 4.39 6 7.5 11 7.5s9.27-3.11 11-7.5c-1.73-4.39-6-7.5-11-7.5zM12 17c-2.76 0-5-2.24-5-5s2.24-5 5-5 5 2.24 5 5-2.24 5-5 5zm0-8c-1.66 0-3 1.34-3 3s1.34 3 3 3 3-1.34 3-3-1.34-3-3-3z" fill="#4da3f7"/></svg>
<div class="t" style="left:394.00px;top:876.86px;font-size:16px;line-height:16px;color:#4f4f4f;font-weight:400;">Taxa de Ocupação</div>
<div class="t" style="right:799.70px;top:876.86px;font-size:16px;line-height:16px;color:#f6b04e;font-weight:400;transform:scaleX(0.9);transform-origin:100% 50%;">83%</div>
<div style="position:absolute;left:394.0px;top:905.2px;width:298.5px;height:16px;background:#f7f7f7;border-radius:4.5px"></div>
<div style="position:absolute;left:394.0px;top:905.2px;width:246px;height:16px;background:#ffcb80;border-radius:4px 0 0 4px"></div>
<div style="position:absolute;left:394.0px;top:953.2px;width:142.5px;height:139.5px;box-sizing:border-box;border:1px solid #e3e3e3;border-radius:16px;background:#fff"></div>
<svg style="position:absolute;left:447.0px;top:968.7px;" width="36" height="36" viewBox="0 0 24 24"><path d="M7 13c1.66 0 3-1.34 3-3S8.66 7 7 7s-3 1.34-3 3 1.34 3 3 3zm12-6h-8v7H3V5H1v15h2v-3h18v3h2v-9c0-2.21-1.79-4-4-4z" fill="#f47b72"/></svg>
<div class="t" style="left:265.00px;width:400px;text-align:center;top:1019.96px;font-size:16px;line-height:16px;color:#5a5a5a;font-weight:700;">92</div>
<div class="t" style="left:265.00px;width:400px;text-align:center;top:1055.26px;font-size:16px;line-height:16px;color:#616161;font-weight:400;">Ocupados</div>
<div style="position:absolute;left:549.5px;top:953.2px;width:142.5px;height:139.5px;box-sizing:border-box;border:1px solid #e3e3e3;border-radius:16px;background:#fff"></div>
<svg style="position:absolute;left:602.5px;top:968.7px;" width="36" height="36" viewBox="0 0 24 24"><path d="M8.65 5.82C9.36 4.72 10.6 4 12 4c2.21 0 4 1.79 4 4 0 1.4-.72 2.64-1.82 3.35L8.65 5.82zM20 17.17c-.02-1.1-.63-2.11-1.61-2.62-.54-.28-1.13-.54-1.77-.76L20 17.17zm1.19 4.02L2.81 2.81 1.39 4.22l8.89 8.89c-1.81.23-3.39.79-4.67 1.45C4.61 15.08 4 16.11 4 17.22V20h13.17l2.61 2.61 1.41-1.42z" fill="#81c784"/></svg>
<div class="t" style="left:420.50px;width:400px;text-align:center;top:1019.96px;font-size:16px;line-height:16px;color:#5a5a5a;font-weight:700;">23</div>
<div class="t" style="left:420.50px;width:400px;text-align:center;top:1055.26px;font-size:16px;line-height:16px;color:#616161;font-weight:400;">Vagos</div>
<div style="position:absolute;left:394.0px;top:1105.2px;width:142.5px;height:139.5px;box-sizing:border-box;border:1px solid #e3e3e3;border-radius:16px;background:#fff"></div>
<svg style="position:absolute;left:447.0px;top:1120.7px;" width="36" height="36" viewBox="0 0 24 24"><path d="M17 12h-5v5h5v-5zM16 1v2H8V1H6v2H5c-1.11 0-1.99.9-1.99 2L3 19c0 1.1.89 2 2 2h14c1.1 0 2-.9 2-2V5c0-1.1-.9-2-2-2h-1V1h-2zm3 18H5V8h14v11z" fill="#ff7f8a"/></svg>
<div class="t" style="left:265.00px;width:400px;text-align:center;top:1171.96px;font-size:16px;line-height:16px;color:#5a5a5a;font-weight:700;"></div>
<div class="t" style="left:265.00px;width:400px;text-align:center;top:1207.26px;font-size:16px;line-height:16px;color:#616161;font-weight:400;">Vendas</div>
<div style="position:absolute;left:549.5px;top:1105.2px;width:142.5px;height:139.5px;box-sizing:border-box;border:1px solid #e3e3e3;border-radius:16px;background:#fff"></div>
<svg style="position:absolute;left:602.5px;top:1120.7px;" width="36" height="36" viewBox="0 0 24 24"><path d="M11.8 10.9c-2.27-.59-3-1.2-3-2.15 0-1.09 1.01-1.85 2.7-1.85 1.78 0 2.44.85 2.5 2.1h2.21c-.07-1.72-1.12-3.3-3.21-3.81V3h-3v2.16c-1.94.42-3.5 1.68-3.5 3.61 0 2.31 1.91 3.46 4.7 4.13 2.5.6 3 1.48 3 2.41 0 .69-.49 1.79-2.7 1.79-2.06 0-2.87-.92-2.98-2.1h-2.2c.12 2.19 1.76 3.42 3.68 3.83V21h3v-2.15c1.95-.37 3.5-1.5 3.5-3.55 0-2.84-2.43-3.81-4.7-4.4z" fill="#64b5f6"/></svg>
<div class="t" style="left:420.50px;width:400px;text-align:center;top:1171.96px;font-size:16px;line-height:16px;color:#5a5a5a;font-weight:700;"></div>
<div class="t" style="left:420.50px;width:400px;text-align:center;top:1207.26px;font-size:16px;line-height:16px;color:#616161;font-weight:400;">Faturamento</div>
<div style="position:absolute;left:613.0px;top:1257.2px;width:33px;height:34px;background:#fff;border-radius:4px;box-shadow:0 1.5px 3px rgba(0,0,0,0.24)"></div>
<div style="position:absolute;left:659.0px;top:1257.2px;width:33px;height:34px;background:#fff;border-radius:4px;box-shadow:0 1.5px 3px rgba(0,0,0,0.24)"></div>
<svg style="position:absolute;left:617.5px;top:1261.7px;" width="24" height="24" viewBox="0 0 24 24"><path d="M15.41 7.41 14 6l-6 6 6 6 1.41-1.41L10.83 12z" fill="#bdbdbd"/></svg>
<svg style="position:absolute;left:663.5px;top:1261.7px;" width="24" height="24" viewBox="0 0 24 24"><path d="M10 6 8.59 7.41 13.17 12l-4.58 4.59L10 18l6-6z" fill="#555"/></svg>
<div style="position:absolute;left:733px;top:807.5px;width:330px;height:499.5px;box-sizing:border-box;border:1px solid #f2f2f2;border-radius:16px;background:#fff"></div>
<svg style="position:absolute;left:748.5px;top:827.2px;" width="24" height="24" viewBox="0 0 24 24"><path d="M17 11V3H7v4H3v14h8v-4h2v4h8V11h-4zM7 19H5v-2h2v2zm0-4H5v-2h2v2zm0-4H5V9h2v2zm4 4H9v-2h2v2zm0-4H9V9h2v2zm0-4H9V5h2v2zm4 8h-2v-2h2v2zm0-4h-2V9h2v2zm0-4h-2V5h2v2zm4 12h-2v-2h2v2zm0-4h-2v-2h2v2z" fill="#9e9e9e"/></svg>
<div class="t" style="left:785.00px;top:828.87px;font-size:20px;line-height:20px;color:#4a4a4a;font-weight:400;-webkit-text-stroke:0.45px #4a4a4a;letter-spacing:0.25px;">Nuvem Boutique Hotel</div>
<div style="position:absolute;left:1003.5px;top:823.2px;width:44px;height:32px;box-sizing:border-box;border:1.5px solid #4ea2f8;border-radius:16px"></div>
<svg style="position:absolute;left:1015.5px;top:829.2px;" width="20" height="20" viewBox="0 0 24 24"><path d="M12 4.5C7 4.5 2.73 7.61 1 12c1.73 4.39 6 7.5 11 7.5s9.27-3.11 11-7.5c-1.73-4.39-6-7.5-11-7.5zM12 17c-2.76 0-5-2.24-5-5s2.24-5 5-5 5 2.24 5 5-2.24 5-5 5zm0-8c-1.66 0-3 1.34-3 3s1.34 3 3 3 3-1.34 3-3-1.34-3-3-3z" fill="#4da3f7"/></svg>
<div class="t" style="left:748.50px;top:876.86px;font-size:16px;line-height:16px;color:#4f4f4f;font-weight:400;">Taxa de Ocupação</div>
<div class="t" style="right:445.20px;top:876.86px;font-size:16px;line-height:16px;color:#5aaaf0;font-weight:400;transform:scaleX(0.9);transform-origin:100% 50%;">21%</div>
<div style="position:absolute;left:748.5px;top:905.2px;width:298.5px;height:16px;background:#f7f7f7;border-radius:4.5px"></div>
<div style="position:absolute;left:748.5px;top:905.2px;width:83px;height:16px;background:#64b5f6;border-radius:4px 0 0 4px"></div>
<div style="position:absolute;left:748.5px;top:953.2px;width:142.5px;height:139.5px;box-sizing:border-box;border:1px solid #e3e3e3;border-radius:16px;background:#fff"></div>
<svg style="position:absolute;left:801.5px;top:968.7px;" width="36" height="36" viewBox="0 0 24 24"><path d="M7 13c1.66 0 3-1.34 3-3S8.66 7 7 7s-3 1.34-3 3 1.34 3 3 3zm12-6h-8v7H3V5H1v15h2v-3h18v3h2v-9c0-2.21-1.79-4-4-4z" fill="#f47b72"/></svg>
<div class="t" style="left:619.50px;width:400px;text-align:center;top:1019.96px;font-size:16px;line-height:16px;color:#5a5a5a;font-weight:700;">13</div>
<div class="t" style="left:619.50px;width:400px;text-align:center;top:1055.26px;font-size:16px;line-height:16px;color:#616161;font-weight:400;">Ocupados</div>
<div style="position:absolute;left:904.0px;top:953.2px;width:142.5px;height:139.5px;box-sizing:border-box;border:1px solid #e3e3e3;border-radius:16px;background:#fff"></div>
<svg style="position:absolute;left:957.0px;top:968.7px;" width="36" height="36" viewBox="0 0 24 24"><path d="M8.65 5.82C9.36 4.72 10.6 4 12 4c2.21 0 4 1.79 4 4 0 1.4-.72 2.64-1.82 3.35L8.65 5.82zM20 17.17c-.02-1.1-.63-2.11-1.61-2.62-.54-.28-1.13-.54-1.77-.76L20 17.17zm1.19 4.02L2.81 2.81 1.39 4.22l8.89 8.89c-1.81.23-3.39.79-4.67 1.45C4.61 15.08 4 16.11 4 17.22V20h13.17l2.61 2.61 1.41-1.42z" fill="#81c784"/></svg>
<div class="t" style="left:775.00px;width:400px;text-align:center;top:1019.96px;font-size:16px;line-height:16px;color:#5a5a5a;font-weight:700;">58</div>
<div class="t" style="left:775.00px;width:400px;text-align:center;top:1055.26px;font-size:16px;line-height:16px;color:#616161;font-weight:400;">Vagos</div>
<div style="position:absolute;left:748.5px;top:1105.2px;width:142.5px;height:139.5px;box-sizing:border-box;border:1px solid #e3e3e3;border-radius:16px;background:#fff"></div>
<svg style="position:absolute;left:801.5px;top:1120.7px;" width="36" height="36" viewBox="0 0 24 24"><path d="M17 12h-5v5h5v-5zM16 1v2H8V1H6v2H5c-1.11 0-1.99.9-1.99 2L3 19c0 1.1.89 2 2 2h14c1.1 0 2-.9 2-2V5c0-1.1-.9-2-2-2h-1V1h-2zm3 18H5V8h14v11z" fill="#ff7f8a"/></svg>
<div class="t" style="left:619.50px;width:400px;text-align:center;top:1171.96px;font-size:16px;line-height:16px;color:#5a5a5a;font-weight:700;"></div>
<div class="t" style="left:619.50px;width:400px;text-align:center;top:1207.26px;font-size:16px;line-height:16px;color:#616161;font-weight:400;">Vendas</div>
<div style="position:absolute;left:904.0px;top:1105.2px;width:142.5px;height:139.5px;box-sizing:border-box;border:1px solid #e3e3e3;border-radius:16px;background:#fff"></div>
<svg style="position:absolute;left:957.0px;top:1120.7px;" width="36" height="36" viewBox="0 0 24 24"><path d="M11.8 10.9c-2.27-.59-3-1.2-3-2.15 0-1.09 1.01-1.85 2.7-1.85 1.78 0 2.44.85 2.5 2.1h2.21c-.07-1.72-1.12-3.3-3.21-3.81V3h-3v2.16c-1.94.42-3.5 1.68-3.5 3.61 0 2.31 1.91 3.46 4.7 4.13 2.5.6 3 1.48 3 2.41 0 .69-.49 1.79-2.7 1.79-2.06 0-2.87-.92-2.98-2.1h-2.2c.12 2.19 1.76 3.42 3.68 3.83V21h3v-2.15c1.95-.37 3.5-1.5 3.5-3.55 0-2.84-2.43-3.81-4.7-4.4z" fill="#64b5f6"/></svg>
<div class="t" style="left:775.00px;width:400px;text-align:center;top:1171.96px;font-size:16px;line-height:16px;color:#5a5a5a;font-weight:700;"></div>
<div class="t" style="left:775.00px;width:400px;text-align:center;top:1207.26px;font-size:16px;line-height:16px;color:#616161;font-weight:400;">Faturamento</div>
<div style="position:absolute;left:967.5px;top:1257.2px;width:33px;height:34px;background:#fff;border-radius:4px;box-shadow:0 1.5px 3px rgba(0,0,0,0.24)"></div>
<div style="position:absolute;left:1013.5px;top:1257.2px;width:33px;height:34px;background:#fff;border-radius:4px;box-shadow:0 1.5px 3px rgba(0,0,0,0.24)"></div>
<svg style="position:absolute;left:972.0px;top:1261.7px;" width="24" height="24" viewBox="0 0 24 24"><path d="M15.41 7.41 14 6l-6 6 6 6 1.41-1.41L10.83 12z" fill="#bdbdbd"/></svg>
<svg style="position:absolute;left:1018.0px;top:1261.7px;" width="24" height="24" viewBox="0 0 24 24"><path d="M10 6 8.59 7.41 13.17 12l-4.58 4.59L10 18l6-6z" fill="#555"/></svg>
<div style="position:absolute;left:1087.5px;top:807.5px;width:330px;height:499.5px;box-sizing:border-box;border:1px solid #f2f2f2;border-radius:16px;background:#fff"></div>
<svg style="position:absolute;left:1103.0px;top:827.2px;" width="24" height="24" viewBox="0 0 24 24"><path d="M17 11V3H7v4H3v14h8v-4h2v4h8V11h-4zM7 19H5v-2h2v2zm0-4H5v-2h2v2zm0-4H5V9h2v2zm4 4H9v-2h2v2zm0-4H9V9h2v2zm0-4H9V5h2v2zm4 8h-2v-2h2v2zm0-4h-2V9h2v2zm0-4h-2V5h2v2zm4 12h-2v-2h2v2zm0-4h-2v-2h2v2z" fill="#9e9e9e"/></svg>
<div class="t" style="left:1139.50px;top:828.87px;font-size:20px;line-height:20px;color:#4a4a4a;font-weight:400;-webkit-text-stroke:0.45px #4a4a4a;letter-spacing:0.25px;">Hotel Serra Verde</div>
<div style="position:absolute;left:1358.0px;top:823.2px;width:44px;height:32px;box-sizing:border-box;border:1.5px solid #4ea2f8;border-radius:16px"></div>
<svg style="position:absolute;left:1370.0px;top:829.2px;" width="20" height="20" viewBox="0 0 24 24"><path d="M12 4.5C7 4.5 2.73 7.61 1 12c1.73 4.39 6 7.5 11 7.5s9.27-3.11 11-7.5c-1.73-4.39-6-7.5-11-7.5zM12 17c-2.76 0-5-2.24-5-5s2.24-5 5-5 5 2.24 5 5-2.24 5-5 5zm0-8c-1.66 0-3 1.34-3 3s1.34 3 3 3 3-1.34 3-3-1.34-3-3-3z" fill="#4da3f7"/></svg>
<div class="t" style="left:1103.00px;top:876.86px;font-size:16px;line-height:16px;color:#4f4f4f;font-weight:400;">Taxa de Ocupação</div>
<div class="t" style="right:90.70px;top:876.86px;font-size:16px;line-height:16px;color:#66bb6a;font-weight:400;transform:scaleX(0.9);transform-origin:100% 50%;">43%</div>
<div style="position:absolute;left:1103.0px;top:905.2px;width:298.5px;height:16px;background:#f7f7f7;border-radius:4.5px"></div>
<div style="position:absolute;left:1103.0px;top:905.2px;width:143px;height:16px;background:#81c784;border-radius:4px 0 0 4px"></div>
<div style="position:absolute;left:1103.0px;top:953.2px;width:142.5px;height:139.5px;box-sizing:border-box;border:1px solid #e3e3e3;border-radius:16px;background:#fff"></div>
<svg style="position:absolute;left:1156.0px;top:968.7px;" width="36" height="36" viewBox="0 0 24 24"><path d="M7 13c1.66 0 3-1.34 3-3S8.66 7 7 7s-3 1.34-3 3 1.34 3 3 3zm12-6h-8v7H3V5H1v15h2v-3h18v3h2v-9c0-2.21-1.79-4-4-4z" fill="#f47b72"/></svg>
<div class="t" style="left:974.00px;width:400px;text-align:center;top:1019.96px;font-size:16px;line-height:16px;color:#5a5a5a;font-weight:700;">38</div>
<div class="t" style="left:974.00px;width:400px;text-align:center;top:1055.26px;font-size:16px;line-height:16px;color:#616161;font-weight:400;">Ocupados</div>
<div style="position:absolute;left:1258.5px;top:953.2px;width:142.5px;height:139.5px;box-sizing:border-box;border:1px solid #e3e3e3;border-radius:16px;background:#fff"></div>
<svg style="position:absolute;left:1311.5px;top:968.7px;" width="36" height="36" viewBox="0 0 24 24"><path d="M8.65 5.82C9.36 4.72 10.6 4 12 4c2.21 0 4 1.79 4 4 0 1.4-.72 2.64-1.82 3.35L8.65 5.82zM20 17.17c-.02-1.1-.63-2.11-1.61-2.62-.54-.28-1.13-.54-1.77-.76L20 17.17zm1.19 4.02L2.81 2.81 1.39 4.22l8.89 8.89c-1.81.23-3.39.79-4.67 1.45C4.61 15.08 4 16.11 4 17.22V20h13.17l2.61 2.61 1.41-1.42z" fill="#81c784"/></svg>
<div class="t" style="left:1129.50px;width:400px;text-align:center;top:1019.96px;font-size:16px;line-height:16px;color:#5a5a5a;font-weight:700;">44</div>
<div class="t" style="left:1129.50px;width:400px;text-align:center;top:1055.26px;font-size:16px;line-height:16px;color:#616161;font-weight:400;">Vagos</div>
<div style="position:absolute;left:1103.0px;top:1105.2px;width:142.5px;height:139.5px;box-sizing:border-box;border:1px solid #e3e3e3;border-radius:16px;background:#fff"></div>
<svg style="position:absolute;left:1156.0px;top:1120.7px;" width="36" height="36" viewBox="0 0 24 24"><path d="M17 12h-5v5h5v-5zM16 1v2H8V1H6v2H5c-1.11 0-1.99.9-1.99 2L3 19c0 1.1.89 2 2 2h14c1.1 0 2-.9 2-2V5c0-1.1-.9-2-2-2h-1V1h-2zm3 18H5V8h14v11z" fill="#ff7f8a"/></svg>
<div class="t" style="left:974.00px;width:400px;text-align:center;top:1171.96px;font-size:16px;line-height:16px;color:#5a5a5a;font-weight:700;"></div>
<div class="t" style="left:974.00px;width:400px;text-align:center;top:1207.26px;font-size:16px;line-height:16px;color:#616161;font-weight:400;">Vendas</div>
<div style="position:absolute;left:1258.5px;top:1105.2px;width:142.5px;height:139.5px;box-sizing:border-box;border:1px solid #e3e3e3;border-radius:16px;background:#fff"></div>
<svg style="position:absolute;left:1311.5px;top:1120.7px;" width="36" height="36" viewBox="0 0 24 24"><path d="M11.8 10.9c-2.27-.59-3-1.2-3-2.15 0-1.09 1.01-1.85 2.7-1.85 1.78 0 2.44.85 2.5 2.1h2.21c-.07-1.72-1.12-3.3-3.21-3.81V3h-3v2.16c-1.94.42-3.5 1.68-3.5 3.61 0 2.31 1.91 3.46 4.7 4.13 2.5.6 3 1.48 3 2.41 0 .69-.49 1.79-2.7 1.79-2.06 0-2.87-.92-2.98-2.1h-2.2c.12 2.19 1.76 3.42 3.68 3.83V21h3v-2.15c1.95-.37 3.5-1.5 3.5-3.55 0-2.84-2.43-3.81-4.7-4.4z" fill="#64b5f6"/></svg>
<div class="t" style="left:1129.50px;width:400px;text-align:center;top:1171.96px;font-size:16px;line-height:16px;color:#5a5a5a;font-weight:700;"></div>
<div class="t" style="left:1129.50px;width:400px;text-align:center;top:1207.26px;font-size:16px;line-height:16px;color:#616161;font-weight:400;">Faturamento</div>
<div style="position:absolute;left:1322.0px;top:1257.2px;width:33px;height:34px;background:#fff;border-radius:4px;box-shadow:0 1.5px 3px rgba(0,0,0,0.24)"></div>
<div style="position:absolute;left:1368.0px;top:1257.2px;width:33px;height:34px;background:#fff;border-radius:4px;box-shadow:0 1.5px 3px rgba(0,0,0,0.24)"></div>
<svg style="position:absolute;left:1326.5px;top:1261.7px;" width="24" height="24" viewBox="0 0 24 24"><path d="M15.41 7.41 14 6l-6 6 6 6 1.41-1.41L10.83 12z" fill="#bdbdbd"/></svg>
<svg style="position:absolute;left:1372.5px;top:1261.7px;" width="24" height="24" viewBox="0 0 24 24"><path d="M10 6 8.59 7.41 13.17 12l-4.58 4.59L10 18l6-6z" fill="#555"/></svg>
</div></div>
</div></div>
</body></html>
